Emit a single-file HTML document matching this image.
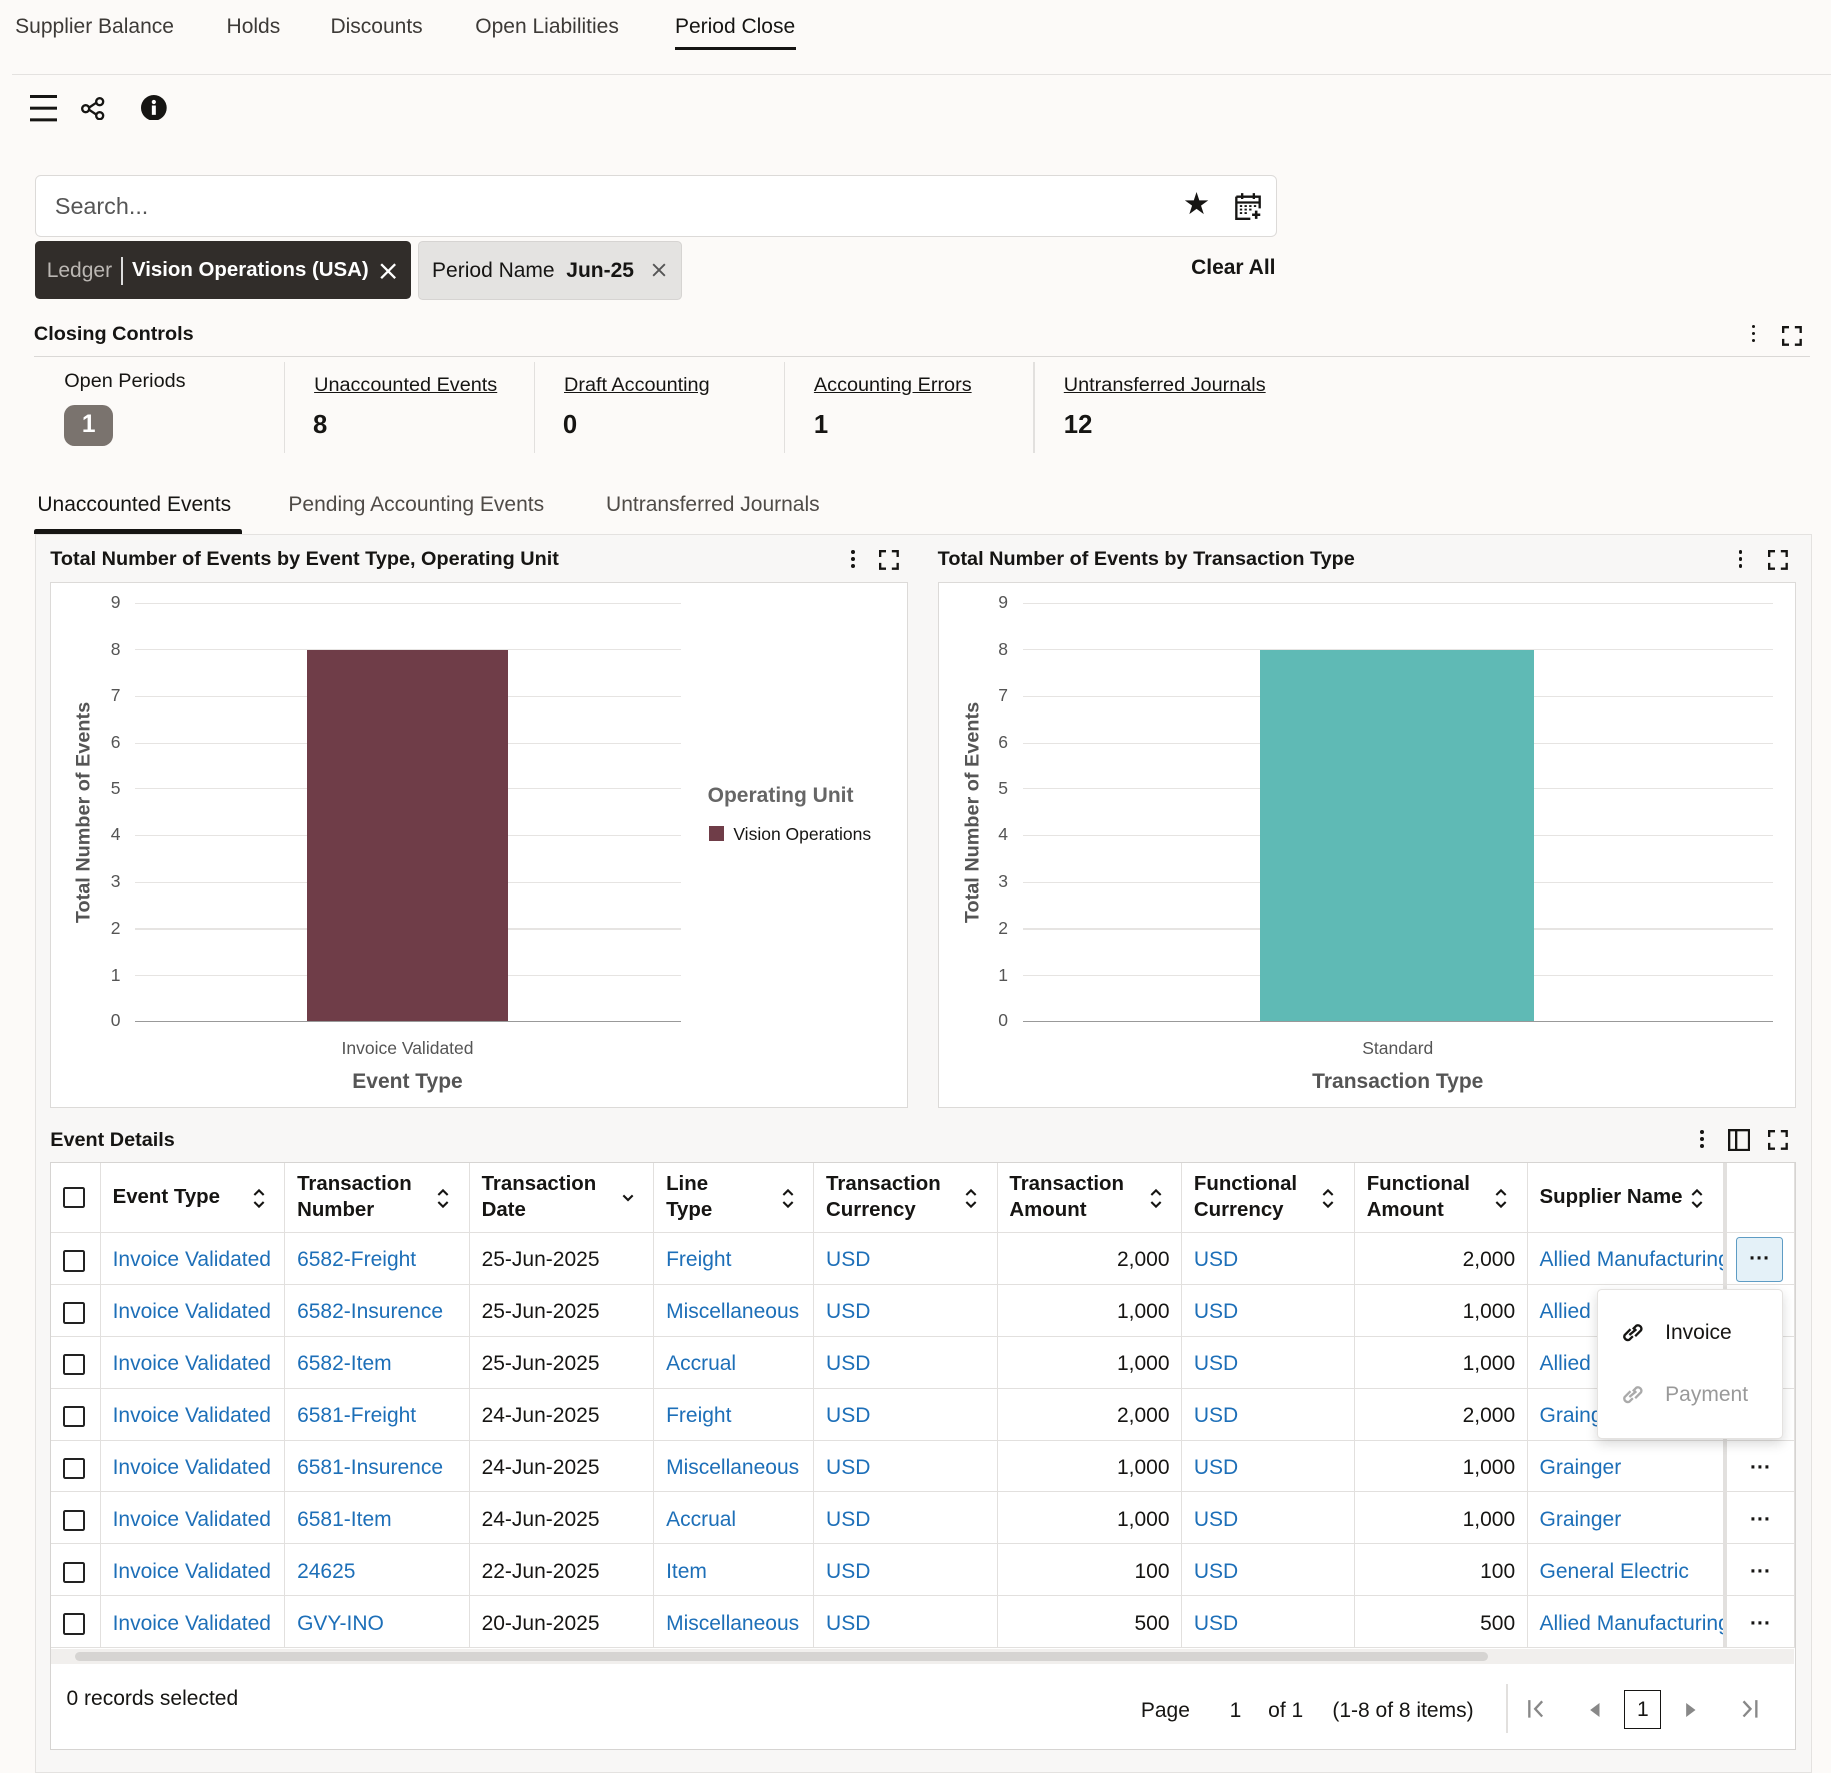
<!DOCTYPE html>
<html><head><meta charset="utf-8"><style>
html,body{margin:0;padding:0}
body{width:1568px;height:1502px;zoom:1.16773;background:#fcfaf8;font-family:"Liberation Sans",sans-serif;color:#161513;position:relative;overflow:hidden}
.a{position:absolute;white-space:nowrap}
.tab{font-size:18px;color:#3d3a37;top:13px}
.lnk{color:#1d6fb8}
.hd{font-size:17px;font-weight:bold}
table{border-collapse:collapse;table-layout:fixed}
td,th{border-right:1px solid #e2e0de;border-bottom:1px solid #e2e0de;font-size:18px;padding:0 10px;overflow:hidden;white-space:nowrap;text-align:left}
th{font-weight:bold;height:59px;line-height:23px;font-size:17.5px;position:relative}
td{height:40.6px;padding-top:3px;line-height:20px}
.cb{display:inline-block;width:15px;height:15px;border:2px solid #222;border-radius:2px;vertical-align:middle}
.srt{position:absolute;right:16px;top:21px}
.r{text-align:right}
.gl{position:absolute;height:1px;background:#e6e4e2}
.yl{position:absolute;font-size:15px;color:#555;width:20px;text-align:center}
</style></head><body>
<svg width="0" height="0" style="position:absolute"><defs><symbol id="s" viewBox="0 0 12 18"><path d="M2 6l4-4 4 4M2 12l4 4 4-4" fill="none" stroke="#161513" stroke-width="1.8"/></symbol></defs></svg>
<!-- tabs -->
<div class="a tab" style="left:13px">Supplier Balance</div>
<div class="a tab" style="left:194px">Holds</div>
<div class="a tab" style="left:283px">Discounts</div>
<div class="a tab" style="left:407px">Open Liabilities</div>
<div class="a tab" style="left:578px;color:#161513">Period Close</div>
<div class="a" style="left:578px;top:40px;width:104px;height:3px;background:#161513"></div>
<div class="a" style="left:10px;top:63px;width:1558px;height:1px;background:#e4e2e0"></div>
<!-- toolbar icons -->
<div class="a" style="left:26px;top:81px;width:23px;height:3px;background:#161513;box-shadow:0 10px 0 #161513,0 20px 0 #161513"></div>
<svg class="a" style="left:69px;top:83px" width="22" height="20" viewBox="0 0 22 20" fill="none" stroke="#161513" stroke-width="2"><circle cx="4" cy="10" r="3"/><circle cx="16" cy="4" r="3"/><circle cx="16" cy="16" r="3"/><path d="M7 9l6-4M7 11l6 4"/></svg>
<svg class="a" style="left:121px;top:81px" width="22" height="22" viewBox="0 0 22 22"><circle cx="11" cy="11" r="11" fill="#161513"/><circle cx="11" cy="6" r="1.8" fill="#fff"/><rect x="9.3" y="9" width="3.4" height="8" fill="#fff"/></svg>
<!-- search -->
<div class="a" style="left:30px;top:150px;width:1062px;height:51px;background:#fff;border:1px solid #dcdad8;border-radius:5px"></div>
<div class="a" style="left:47px;top:165px;font-size:20px;color:#555">Search...</div>
<div class="a" style="left:1013px;top:163px;font-size:26px;line-height:1">★</div>
<svg class="a" style="left:1057px;top:164px" width="25" height="25" viewBox="0 0 25 25" fill="none" stroke="#161513" stroke-width="2"><path d="M2 4h20v10M2 4v19h12M2 9h20"/><path d="M7 1v5M17 1v5"/><path d="M5 12h2M9 12h2M13 12h2M17 12h2M5 15h2M9 15h2M13 15h2M5 18h2M9 18h2" stroke-width="1.6"/><path d="M19 16v7M15.5 19.5h7" stroke-width="2.2"/></svg>
<!-- chips -->
<div class="a" style="left:30px;top:206px;width:322px;height:50px;background:#312d2a;border-radius:4px"></div>
<div class="a" style="left:40px;top:222px;font-size:18px;color:#bbb7b3">Ledger</div>
<div class="a" style="left:104px;top:220px;width:1px;height:24px;background:#ddd"></div>
<div class="a" style="left:113px;top:222px;font-size:17.5px;color:#fff;font-weight:bold">Vision Operations (USA)</div>
<svg class="a" style="left:325px;top:225px" width="14" height="14" stroke="#fff" stroke-width="2"><path d="M1 1l12 12M13 1L1 13"/></svg>
<div class="a" style="left:358px;top:206px;width:224px;height:49px;background:#e4e3e1;border:1px solid #d6d4d2;border-radius:4px"></div>
<div class="a" style="left:370px;top:222px;font-size:18px">Period Name&nbsp; <b>Jun-25</b></div>
<svg class="a" style="left:558px;top:225px" width="12" height="12" stroke="#555" stroke-width="1.6"><path d="M1 1l10 10M11 1L1 11"/></svg>
<div class="a" style="left:1020px;top:219px;font-size:18px;font-weight:bold">Clear All</div>
<!-- closing controls -->
<div class="a hd" style="left:29px;top:277px">Closing Controls</div>
<div class="a" style="left:1500px;top:278px;width:3px;height:3px;background:#161513;border-radius:2px;box-shadow:0 6px 0 #161513,0 12px 0 #161513"></div>
<svg class="a" style="left:1526px;top:279px" width="17" height="17" fill="none" stroke="#161513" stroke-width="2"><path d="M1 6V1h5M11 1h5v5M16 11v5h-5M6 16H1v-5"/></svg>
<div class="a" style="left:29px;top:305px;width:1521px;height:1px;background:#dad8d6"></div>
<div class="a" style="left:243px;top:310px;width:1px;height:78px;background:#e2e0de"></div>
<div class="a" style="left:457px;top:310px;width:1px;height:78px;background:#e2e0de"></div>
<div class="a" style="left:671px;top:310px;width:1px;height:78px;background:#e2e0de"></div>
<div class="a" style="left:885px;top:310px;width:1px;height:78px;background:#e2e0de"></div>
<div class="a" style="left:55px;top:317px;font-size:17px">Open Periods</div>
<div class="a" style="left:55px;top:347px;width:42px;height:35px;background:#7a736e;border-radius:9px;color:#fff;font-weight:bold;font-size:21px;text-align:center;line-height:35px">1</div>
<div class="a" style="left:269px;top:320px;font-size:17px;text-decoration:underline">Unaccounted Events</div>
<div class="a" style="left:483px;top:320px;font-size:17px;text-decoration:underline">Draft Accounting</div>
<div class="a" style="left:697px;top:320px;font-size:17px;text-decoration:underline">Accounting Errors</div>
<div class="a" style="left:911px;top:320px;font-size:17px;text-decoration:underline">Untransferred Journals</div>
<div class="a" style="left:268px;top:352px;font-size:22px;font-weight:bold">8</div>
<div class="a" style="left:482px;top:352px;font-size:22px;font-weight:bold">0</div>
<div class="a" style="left:697px;top:352px;font-size:22px;font-weight:bold">1</div>
<div class="a" style="left:911px;top:352px;font-size:22px;font-weight:bold">12</div>
<!-- sub tabs -->
<div class="a" style="left:32px;top:422px;font-size:18px;color:#161513">Unaccounted Events</div>
<div class="a" style="left:247px;top:422px;font-size:18px;color:#4f4b47">Pending Accounting Events</div>
<div class="a" style="left:519px;top:422px;font-size:18px;color:#4f4b47">Untransferred Journals</div>
<div class="a" style="left:29px;top:453px;width:178px;height:4px;background:#161513;border-radius:2px 2px 0 0"></div>
<!-- panel -->
<div class="a" style="left:30px;top:457px;width:1520px;height:1060px;background:#f8f7f6;border:1px solid #e4e2e0"></div>
<div class="a hd" style="left:43px;top:469px">Total Number of Events by Event Type, Operating Unit</div>
<div class="a hd" style="left:803px;top:469px">Total Number of Events by Transaction Type</div>
<div class="a" style="left:729px;top:471px;width:3px;height:3px;background:#161513;border-radius:2px;box-shadow:0 6px 0 #161513,0 12px 0 #161513"></div>
<svg class="a" style="left:753px;top:471px" width="17" height="17" fill="none" stroke="#161513" stroke-width="2"><path d="M1 6V1h5M11 1h5v5M16 11v5h-5M6 16H1v-5"/></svg>
<div class="a" style="left:1489px;top:471px;width:3px;height:3px;background:#161513;border-radius:2px;box-shadow:0 6px 0 #161513,0 12px 0 #161513"></div>
<svg class="a" style="left:1514px;top:471px" width="17" height="17" fill="none" stroke="#161513" stroke-width="2"><path d="M1 6V1h5M11 1h5v5M16 11v5h-5M6 16H1v-5"/></svg>
<!-- left chart -->
<div class="a" style="left:43px;top:498px;width:733px;height:449px;background:#fff;border:1px solid #dcdad8"></div>
<div class="gl" style="left:116px;top:516px;width:467px"></div><div class="gl" style="left:116px;top:556px;width:467px"></div><div class="gl" style="left:116px;top:596px;width:467px"></div><div class="gl" style="left:116px;top:636px;width:467px"></div><div class="gl" style="left:116px;top:675px;width:467px"></div><div class="gl" style="left:116px;top:715px;width:467px"></div><div class="gl" style="left:116px;top:755px;width:467px"></div><div class="gl" style="left:116px;top:795px;width:467px"></div><div class="gl" style="left:116px;top:835px;width:467px"></div>
<div class="a" style="left:116px;top:874px;width:467px;height:1px;background:#999"></div>
<div class="yl" style="left:89px;top:507px">9</div><div class="yl" style="left:89px;top:547px">8</div><div class="yl" style="left:89px;top:587px">7</div><div class="yl" style="left:89px;top:627px">6</div><div class="yl" style="left:89px;top:666px">5</div><div class="yl" style="left:89px;top:706px">4</div><div class="yl" style="left:89px;top:746px">3</div><div class="yl" style="left:89px;top:786px">2</div><div class="yl" style="left:89px;top:826px">1</div><div class="yl" style="left:89px;top:865px">0</div>
<div class="a" style="left:263px;top:557px;width:172px;height:317px;background:#6f3d48"></div>
<div class="a" style="left:-28px;top:686px;width:200px;text-align:center;transform:rotate(-90deg);font-size:17px;font-weight:bold;color:#555">Total Number of Events</div>
<div class="a" style="left:249px;top:889px;width:200px;text-align:center;font-size:15px;color:#555">Invoice Validated</div>
<div class="a" style="left:249px;top:916px;width:200px;text-align:center;font-size:18px;font-weight:bold;color:#555">Event Type</div>
<div class="a" style="left:606px;top:671px;font-size:18px;font-weight:bold;color:#666">Operating Unit</div>
<div class="a" style="left:607px;top:707px;width:13px;height:13px;background:#6f3d48"></div>
<div class="a" style="left:628px;top:706px;font-size:15px">Vision Operations</div>
<!-- right chart -->
<div class="a" style="left:803px;top:498px;width:733px;height:449px;background:#fff;border:1px solid #dcdad8"></div>
<div class="gl" style="left:876px;top:516px;width:642px"></div><div class="gl" style="left:876px;top:556px;width:642px"></div><div class="gl" style="left:876px;top:596px;width:642px"></div><div class="gl" style="left:876px;top:636px;width:642px"></div><div class="gl" style="left:876px;top:675px;width:642px"></div><div class="gl" style="left:876px;top:715px;width:642px"></div><div class="gl" style="left:876px;top:755px;width:642px"></div><div class="gl" style="left:876px;top:795px;width:642px"></div><div class="gl" style="left:876px;top:835px;width:642px"></div>
<div class="a" style="left:876px;top:874px;width:642px;height:1px;background:#999"></div>
<div class="yl" style="left:849px;top:507px">9</div><div class="yl" style="left:849px;top:547px">8</div><div class="yl" style="left:849px;top:587px">7</div><div class="yl" style="left:849px;top:627px">6</div><div class="yl" style="left:849px;top:666px">5</div><div class="yl" style="left:849px;top:706px">4</div><div class="yl" style="left:849px;top:746px">3</div><div class="yl" style="left:849px;top:786px">2</div><div class="yl" style="left:849px;top:826px">1</div><div class="yl" style="left:849px;top:865px">0</div>
<div class="a" style="left:1079px;top:557px;width:235px;height:317px;background:#5fbab5"></div>
<div class="a" style="left:733px;top:686px;width:200px;text-align:center;transform:rotate(-90deg);font-size:17px;font-weight:bold;color:#555">Total Number of Events</div>
<div class="a" style="left:1097px;top:889px;width:200px;text-align:center;font-size:15px;color:#555">Standard</div>
<div class="a" style="left:1077px;top:916px;width:240px;text-align:center;font-size:18px;font-weight:bold;color:#555">Transaction Type</div>
<!-- event details -->
<div class="a hd" style="left:43px;top:967px">Event Details</div>
<div class="a" style="left:1456px;top:968px;width:3px;height:3px;background:#161513;border-radius:2px;box-shadow:0 6px 0 #161513,0 12px 0 #161513"></div>
<svg class="a" style="left:1480px;top:967px" width="19" height="19" fill="none" stroke="#161513" stroke-width="2"><rect x="1" y="1" width="17" height="17"/><path d="M7 1v17"/></svg>
<svg class="a" style="left:1514px;top:968px" width="17" height="17" fill="none" stroke="#161513" stroke-width="2"><path d="M1 6V1h5M11 1h5v5M16 11v5h-5M6 16H1v-5"/></svg>
<div class="a" style="left:43px;top:995px;width:1493px;height:502px;background:#fff;border:1px solid #d6d4d2"></div>
<table class="a" style="left:44px;top:996px;width:1493px">
<colgroup><col style="width:42px"><col style="width:158px"><col style="width:158px"><col style="width:158px"><col style="width:137px"><col style="width:157px"><col style="width:158px"><col style="width:148px"><col style="width:148px"><col style="width:169px"><col style="width:60px"></colgroup>
<tr><th><span class="cb"></span></th><th>Event Type<svg class="srt" width="12" height="18"><use href="#s"/></svg></th><th>Transaction<br>Number<svg class="srt" width="12" height="18"><use href="#s"/></svg></th><th>Transaction<br>Date<svg class="srt" width="12" height="10" style="top:26px"><path d="M2 2l4 4 4-4" fill="none" stroke="#161513" stroke-width="1.8"/></svg></th><th>Line<br>Type<svg class="srt" width="12" height="18"><use href="#s"/></svg></th><th>Transaction<br>Currency<svg class="srt" width="12" height="18"><use href="#s"/></svg></th><th>Transaction<br>Amount<svg class="srt" width="12" height="18"><use href="#s"/></svg></th><th>Functional<br>Currency<svg class="srt" width="12" height="18"><use href="#s"/></svg></th><th>Functional<br>Amount<svg class="srt" width="12" height="18"><use href="#s"/></svg></th><th style="border-right:4px solid #e2e0de">Supplier Name<svg class="srt" width="12" height="18"><use href="#s"/></svg></th><th></th></tr>
<tr><td><span class="cb"></span></td><td class="lnk">Invoice Validated</td><td class="lnk">6582-Freight</td><td>25-Jun-2025</td><td class="lnk">Freight</td><td class="lnk">USD</td><td class="r">2,000</td><td class="lnk">USD</td><td class="r">2,000</td><td class="lnk" style="border-right:4px solid #e2e0de">Allied Manufacturing</td><td></td></tr>
<tr><td><span class="cb"></span></td><td class="lnk">Invoice Validated</td><td class="lnk">6582-Insurence</td><td>25-Jun-2025</td><td class="lnk">Miscellaneous</td><td class="lnk">USD</td><td class="r">1,000</td><td class="lnk">USD</td><td class="r">1,000</td><td class="lnk" style="border-right:4px solid #e2e0de">Allied</td><td></td></tr>
<tr><td><span class="cb"></span></td><td class="lnk">Invoice Validated</td><td class="lnk">6582-Item</td><td>25-Jun-2025</td><td class="lnk">Accrual</td><td class="lnk">USD</td><td class="r">1,000</td><td class="lnk">USD</td><td class="r">1,000</td><td class="lnk" style="border-right:4px solid #e2e0de">Allied</td><td></td></tr>
<tr><td><span class="cb"></span></td><td class="lnk">Invoice Validated</td><td class="lnk">6581-Freight</td><td>24-Jun-2025</td><td class="lnk">Freight</td><td class="lnk">USD</td><td class="r">2,000</td><td class="lnk">USD</td><td class="r">2,000</td><td class="lnk" style="border-right:4px solid #e2e0de">Grainger</td><td></td></tr>
<tr><td><span class="cb"></span></td><td class="lnk">Invoice Validated</td><td class="lnk">6581-Insurence</td><td>24-Jun-2025</td><td class="lnk">Miscellaneous</td><td class="lnk">USD</td><td class="r">1,000</td><td class="lnk">USD</td><td class="r">1,000</td><td class="lnk" style="border-right:4px solid #e2e0de">Grainger</td><td style="font-weight:bold;text-align:center">···</td></tr>
<tr><td><span class="cb"></span></td><td class="lnk">Invoice Validated</td><td class="lnk">6581-Item</td><td>24-Jun-2025</td><td class="lnk">Accrual</td><td class="lnk">USD</td><td class="r">1,000</td><td class="lnk">USD</td><td class="r">1,000</td><td class="lnk" style="border-right:4px solid #e2e0de">Grainger</td><td style="font-weight:bold;text-align:center">···</td></tr>
<tr><td><span class="cb"></span></td><td class="lnk">Invoice Validated</td><td class="lnk">24625</td><td>22-Jun-2025</td><td class="lnk">Item</td><td class="lnk">USD</td><td class="r">100</td><td class="lnk">USD</td><td class="r">100</td><td class="lnk" style="border-right:4px solid #e2e0de">General Electric</td><td style="font-weight:bold;text-align:center">···</td></tr>
<tr><td><span class="cb"></span></td><td class="lnk">Invoice Validated</td><td class="lnk">GVY-INO</td><td>20-Jun-2025</td><td class="lnk">Miscellaneous</td><td class="lnk">USD</td><td class="r">500</td><td class="lnk">USD</td><td class="r">500</td><td class="lnk" style="border-right:4px solid #e2e0de">Allied Manufacturing</td><td style="font-weight:bold;text-align:center">···</td></tr>
</table>
<!-- scrollbar -->
<div class="a" style="left:44px;top:1412px;width:1492px;height:13px;background:#f1efed"></div>
<div class="a" style="left:64px;top:1415px;width:1210px;height:7px;background:#d6d4d2;border-radius:4px"></div>
<!-- highlighted action btn -->
<div class="a" style="left:1487px;top:1059px;width:38px;height:37px;background:#e4f1f8;border:1px solid #5e9cc4;border-radius:3px;text-align:center;font-weight:bold;font-size:18px;line-height:36px">···</div>
<!-- popup -->
<div class="a" style="left:1368px;top:1104px;width:157px;height:127px;background:#fff;border:1px solid #e4e2e0;border-radius:4px;box-shadow:0 4px 10px rgba(0,0,0,.15)"></div>
<svg class="a" style="left:1387px;top:1131px" width="22" height="20" fill="none" stroke="#161513" stroke-width="2"><path d="M9 7l-5 5a3 3 0 004 4l3-3M13 13l5-5a3 3 0 00-4-4l-3 3M8 12l6-5"/></svg>
<div class="a" style="left:1426px;top:1131px;font-size:18px">Invoice</div>
<svg class="a" style="left:1387px;top:1184px" width="22" height="20" fill="none" stroke="#aaa" stroke-width="2"><path d="M9 7l-5 5a3 3 0 004 4l3-3M13 13l5-5a3 3 0 00-4-4l-3 3M8 12l6-5"/></svg>
<div class="a" style="left:1426px;top:1184px;font-size:18px;color:#999">Payment</div>
<!-- footer -->
<div class="a" style="left:57px;top:1445px;font-size:18px">0 records selected</div>
<div class="a" style="left:977px;top:1455px;font-size:18px">Page</div>
<div class="a" style="left:1053px;top:1455px;font-size:18px">1</div>
<div class="a" style="left:1086px;top:1455px;font-size:18px">of 1</div>
<div class="a" style="left:1141px;top:1455px;font-size:18px">(1-8 of 8 items)</div>
<div class="a" style="left:1290px;top:1442px;width:1px;height:42px;background:#e2e0de"></div>
<svg class="a" style="left:1308px;top:1455px" width="16" height="17" fill="none" stroke="#888" stroke-width="2"><path d="M2 1v15M13 2L7 8.5l6 6.5"/></svg>
<svg class="a" style="left:1361px;top:1458px" width="10" height="12"><path d="M9 0v12L1 6z" fill="#888"/></svg>
<div class="a" style="left:1391px;top:1447px;width:30px;height:32px;border:1.5px solid #161513;text-align:center;font-size:18px;line-height:32px">1</div>
<svg class="a" style="left:1443px;top:1458px" width="10" height="12"><path d="M1 0v12l8-6z" fill="#888"/></svg>
<svg class="a" style="left:1490px;top:1455px" width="16" height="17" fill="none" stroke="#888" stroke-width="2"><path d="M14 1v15M3 2l6 6.5L3 15"/></svg>
</body></html>
